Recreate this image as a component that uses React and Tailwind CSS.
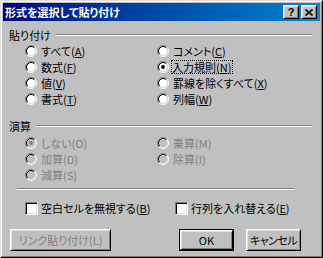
import React from 'react';

const PASTE_ROWS = [
  [{ text: 'すべて', k: 'A' }, { text: 'コメント', k: 'C' }],
  [{ text: '数式', k: 'F' }, { text: '入力規則', k: 'N', checked: true, focus: true }],
  [{ text: '値', k: 'V' }, { text: '罫線を除くすべて', k: 'X' }],
  [{ text: '書式', k: 'T' }, { text: '列幅', k: 'W' }],
];

const OP_ROWS = [
  [{ text: 'しない', k: 'O', checked: true }, { text: '乗算', k: 'M' }],
  [{ text: '加算', k: 'D' }, { text: '除算', k: 'I' }],
  [{ text: '減算', k: 'S' }, null],
];

const raised =
  'border border-t-white border-l-white border-r-black border-b-black shadow-[inset_1px_1px_0_#dfdfdf,inset_-1px_-1px_0_#808080]';

function Radio({ checked, disabled }) {
  return (
    <svg width="12" height="12" viewBox="0 0 12 12" className="shrink-0">
      <circle cx="6" cy="6" r="4.2" fill={disabled ? '#c0c0c0' : '#fff'} />
      <path d="M2.11 9.89A5.5 5.5 0 0 1 9.89 2.11" fill="none" stroke="#808080" />
      <path d="M9.89 2.11A5.5 5.5 0 0 1 2.11 9.89" fill="none" stroke="#fff" />
      <path d="M2.82 9.18A4.5 4.5 0 0 1 9.18 2.82" fill="none" stroke="#000" />
      <path d="M9.18 2.82A4.5 4.5 0 0 1 2.82 9.18" fill="none" stroke="#dfdfdf" />
      {checked && <circle cx="6" cy="6" r="1.9" fill={disabled ? '#808080' : '#000'} />}
    </svg>
  );
}

function Label({ text, k, disabled }) {
  if (disabled) return <>{text}({k})</>;
  return (
    <>
      {text}(<span className="underline underline-offset-[1px]">{k}</span>)
    </>
  );
}

function Option({ opt, disabled }) {
  if (!opt) return null;
  return (
    <div className="flex items-center">
      <Radio checked={opt.checked} disabled={disabled} />
      {opt.focus ? (
        <span className="ml-[2px] border border-dotted border-black pr-px leading-[12px]">
          <Label text={opt.text} k={opt.k} />
        </span>
      ) : (
        <span className={`ml-[4px] leading-[12px] ${disabled ? 'text-[#808080]' : ''}`}>
          <Label text={opt.text} k={opt.k} disabled={disabled} />
        </span>
      )}
    </div>
  );
}

function GroupTitle({ children }) {
  return (
    <div className="mr-[8px] flex h-4 items-center">
      <span className="leading-[12px]">{children}</span>
      <div className="ml-[5px] h-[2px] flex-1 border-t border-b border-t-[#808080] border-b-white" />
    </div>
  );
}

function Checkbox() {
  return (
    <div className="h-[13px] w-[13px] shrink-0 border border-t-[#808080] border-l-[#808080] border-r-white border-b-white bg-white shadow-[inset_1px_1px_0_#000,inset_-1px_-1px_0_#dfdfdf]" />
  );
}

export default function App() {
  return (
    <div className="h-[258px] w-[323px] border border-t-[#dfdfdf] border-l-[#dfdfdf] border-r-black border-b-black font-['Noto_Sans_CJK_JP',sans-serif] text-[11px] text-black [font-feature-settings:'palt']">
      <div className="flex h-full flex-col border border-t-white border-l-white border-r-[#808080] border-b-[#808080] bg-[#c0c0c0] p-px">
        {/* title bar */}
        <div className="flex h-[18px] shrink-0 items-center bg-linear-to-r from-[#000080] to-[#1084d0] pl-[2px] pr-[3px]">
          <span className="flex-1 font-bold leading-none text-white">形式を選択して貼り付け</span>
          <div className={`flex h-[14px] w-4 items-center justify-center bg-[#c0c0c0] ${raised}`}>
            <span className="font-['Liberation_Sans',sans-serif] text-[11px] font-bold leading-none">?</span>
          </div>
          <div className={`ml-[2px] flex h-[14px] w-4 items-center justify-center bg-[#c0c0c0] ${raised}`}>
            <svg width="8" height="7" viewBox="0 0 8 7">
              <path d="M0.5 0.5L7.5 6.5M7.5 0.5L0.5 6.5" stroke="#000" strokeWidth="1.6" />
            </svg>
          </div>
        </div>

        <div className="flex flex-col pl-[6px]">
          <div className="mt-[6px]">
            <GroupTitle>貼り付け</GroupTitle>
          </div>
          {PASTE_ROWS.map((row, i) => (
            <div key={i} className="flex h-4 items-center pl-4">
              <div className="w-[132px]">
                <Option opt={row[0]} />
              </div>
              <Option opt={row[1]} />
            </div>
          ))}

          <div className="mt-[11px]">
            <GroupTitle>演算</GroupTitle>
          </div>
          <div className="mt-px">
            {OP_ROWS.map((row, i) => (
              <div key={i} className="flex h-4 items-center pl-4">
                <div className="w-[132px]">
                  <Option opt={row[0]} disabled />
                </div>
                <Option opt={row[1]} disabled />
              </div>
            ))}
          </div>

          <div className="ml-[8px] mt-[5px] h-[2px] w-[277px] border-t border-b border-t-[#808080] border-b-white" />

          <div className="mt-[10px] flex h-4 items-center pl-4">
            <div className="flex w-[150px] items-center">
              <Checkbox />
              <span className="ml-[3px] leading-[12px]">
                <Label text="空白セルを無視する" k="B" />
              </span>
            </div>
            <div className="flex items-center">
              <Checkbox />
              <span className="ml-[3px] leading-[12px]">
                <Label text="行列を入れ替える" k="E" />
              </span>
            </div>
          </div>

          <div className="mt-[13px] flex h-[22px]">
            <div className={`ml-px flex w-[101px] items-center justify-center text-[#808080] ${raised}`}>
              リンク貼り付け(L)
            </div>
            <div className="ml-[68px] flex w-[55px] border border-black">
              <div className={`flex flex-1 items-center justify-center ${raised}`}>OK</div>
            </div>
            <div className={`ml-[12px] flex w-[55px] items-center justify-center tracking-[-0.5px] ${raised}`}>
              キャンセル
            </div>
          </div>
        </div>
      </div>
    </div>
  );
}
